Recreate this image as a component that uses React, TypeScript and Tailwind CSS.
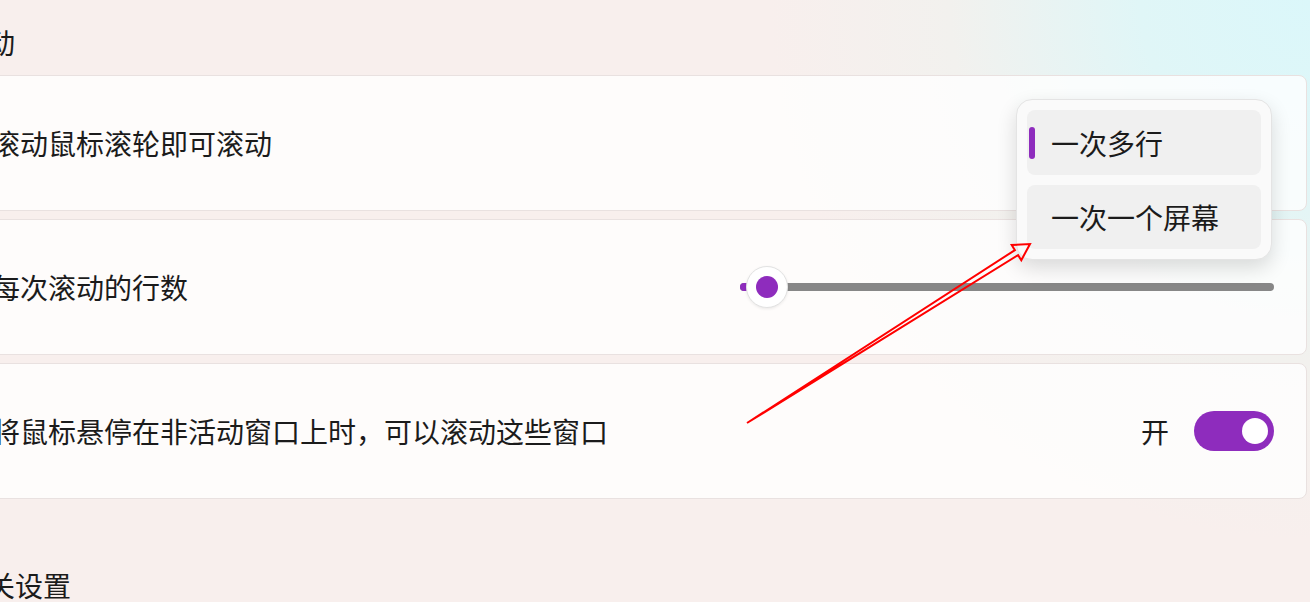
import React from 'react';

const Card: React.FC<{ children: React.ReactNode; className?: string }> = ({ children, className = '' }) => (
  <div
    className={`flex items-center justify-between h-[136px] px-[32px] rounded-[8px] border border-[#e9e1e0] bg-white/80 ${className}`}
  >
    {children}
  </div>
);

const Dropdown: React.FC = () => (
  <div className="absolute right-[34px] top-[23px] w-[256px] p-[10px] flex flex-col gap-[10px] rounded-[16px] border border-[#e4e4e4] bg-[#fafafa] shadow-[0_8px_20px_rgba(0,0,0,0.14)]">
    <div className="relative flex items-center h-[65px] pl-[24px] rounded-[8px] bg-[#f0f0f0]">
      <span className="absolute left-[2px] top-[17px] w-[6px] h-[32px] rounded-full bg-[#8e2cbd]" />
      一次多行
    </div>
    <div className="flex items-center h-[64px] pl-[24px] rounded-[8px] bg-[#f0f0f0]">一次一个屏幕</div>
  </div>
);

const Slider: React.FC = () => (
  <div className="relative flex items-center w-[534px] h-[44px]">
    <div className="h-[8px] w-full rounded-full bg-[#878787]" />
    <div className="absolute left-0 h-[8px] w-[28px] rounded-full bg-[#8e2cbd]" />
    <div className="absolute left-[6px] flex items-center justify-center w-[42px] h-[42px] rounded-full bg-white border border-[#e2e2e2] shadow-[0_1px_3px_rgba(0,0,0,0.08)]">
      <div className="w-[22px] h-[22px] rounded-full bg-[#8e2cbd]" />
    </div>
  </div>
);

const Toggle: React.FC = () => (
  <div className="flex items-center gap-[25px]">
    <span>开</span>
    <div className="flex items-center justify-end w-[80px] h-[40px] pr-[6px] rounded-full bg-[#8e2cbd]">
      <div className="w-[26px] h-[26px] rounded-full bg-white" />
    </div>
  </div>
);

export default function App() {
  return (
    <div className="relative w-[1310px] h-[602px] overflow-hidden text-[28px] text-[#1b1b1b] font-['Noto_Sans_CJK_SC','Microsoft_YaHei',sans-serif] bg-[radial-gradient(circle_at_100%_0%,#dbf7fa_0px,#e0f6f7_170px,#f2f1ee_360px,#f8efed_540px)]">
      <div className="ml-[-41px] w-[1348px] flex flex-col">
        <div className="pt-[22px] pb-[13px] leading-[40px]">滚动</div>

        <div className="flex flex-col gap-[8px]">
          <Card className="relative z-10">
            <span>滚动鼠标滚轮即可滚动</span>
            <Dropdown />
          </Card>
          <Card>
            <span>每次滚动的行数</span>
            <Slider />
          </Card>
          <Card>
            <span>将鼠标悬停在非活动窗口上时，可以滚动这些窗口</span>
            <Toggle />
          </Card>
        </div>

        <div className="mt-[66px] leading-[40px]">相关设置</div>
      </div>

      <svg className="absolute left-0 top-0 z-20 pointer-events-none" width="1310" height="602">
        <polygon
          points="747,423 1018.1,255.1 1021.3,260.2 1030,244 1011.7,245 1014.9,250.1"
          fill="none"
          stroke="#ff0000"
          strokeWidth="2"
          strokeLinejoin="miter"
        />
      </svg>
    </div>
  );
}
